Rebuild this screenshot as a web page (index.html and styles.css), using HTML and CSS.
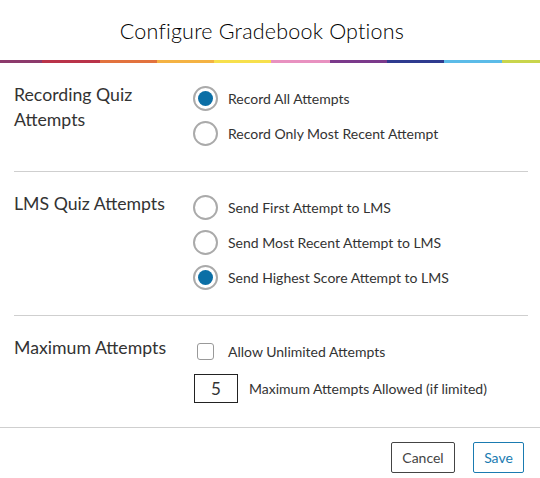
FILE: index.html
```html
<!DOCTYPE html>
<html>
<head>
<meta charset="utf-8">
<link rel="stylesheet" href="styles.css">
</head>
<body>
<div class="dialog">
  <header class="header">
    <h1 class="title">Configure Gradebook Options</h1>
  </header>
  <div class="rainbow">
    <span class="seg c1"></span><span class="seg c2"></span><span class="seg c3"></span><span class="seg c4"></span><span class="seg c5"></span><span class="seg c6"></span><span class="seg c7"></span><span class="seg c8"></span><span class="seg c9"></span><span class="seg c10"></span>
  </div>
  <section class="section">
    <div class="label">Recording Quiz<br>Attempts</div>
    <div class="options">
      <label class="opt"><span class="radio checked"></span><span class="opt-text">Record All Attempts</span></label>
      <label class="opt"><span class="radio"></span><span class="opt-text">Record Only Most Recent Attempt</span></label>
    </div>
  </section>
  <section class="section">
    <div class="label">LMS Quiz Attempts</div>
    <div class="options">
      <label class="opt"><span class="radio"></span><span class="opt-text">Send First Attempt to LMS</span></label>
      <label class="opt"><span class="radio"></span><span class="opt-text">Send Most Recent Attempt to LMS</span></label>
      <label class="opt"><span class="radio checked"></span><span class="opt-text">Send Highest Score Attempt to LMS</span></label>
    </div>
  </section>
  <section class="section last">
    <div class="label">Maximum Attempts</div>
    <div class="options">
      <label class="opt"><span class="checkbox"></span><span class="opt-text">Allow Unlimited Attempts</span></label>
      <div class="opt-input"><span class="numbox">5</span><span class="opt-text">Maximum Attempts Allowed (if limited)</span></div>
    </div>
  </section>
  <footer class="footer">
    <button class="btn cancel">Cancel</button>
    <button class="btn save">Save</button>
  </footer>
</div>
</body>
</html>
```
FILE: styles.css
```css
* { box-sizing: border-box; }
html, body { margin: 0; padding: 0; background: #fff; }
body { font-family: Lato, "Open Sans", sans-serif; color: #333; width: 540px; }
.header { height: 60px; display: flex; align-items: center; justify-content: center; padding-right: 16px; }
.title { margin: 0; font-weight: 300; font-size: 21.5px; color: #000; letter-spacing: 0.2px; padding-top: 1px; }
.rainbow { display: flex; height: 3px; }
.seg { display: block; height: 3px; }
.c1 { width: 42px; background: #8c3a6c; }
.c2 { width: 58px; background: #b93349; }
.c3 { width: 57px; background: #e2723e; }
.c4 { width: 57px; background: #f4b243; }
.c5 { width: 57px; background: #f7e04c; }
.c6 { width: 59px; background: #e891c0; }
.c7 { width: 57px; background: #7b3a8b; }
.c8 { width: 57px; background: #2f3b8f; }
.c9 { width: 58px; background: #5bbbe8; }
.c10 { flex: 1; background: #c9d54c; }
.section { display: flex; margin: 0 12px 0 14px; padding: 18px 0 20px; border-bottom: 1px solid #cfcfcf; }
.section.last { border-bottom: none; padding-bottom: 24px; }
.label { width: 179px; font-size: 17.7px; line-height: 25px; color: #333; padding-top: 1px; }
.options { display: flex; flex-direction: column; }
.opt { display: flex; align-items: center; height: 35px; }
.radio { width: 25px; height: 25px; border: 2px solid #aaa; border-radius: 50%; display: flex; align-items: center; justify-content: center; margin-right: 10px; }
.radio.checked::after { content: ""; width: 15px; height: 15px; border-radius: 50%; background: #0b6fa6; }
.opt-text { font-size: 14px; color: #333; }
.checkbox { width: 17px; height: 17px; border: 1.5px solid #999; border-radius: 3px; margin: 0 14px 0 4px; }
.opt-input { display: flex; align-items: center; margin-top: 5px; }
.numbox { width: 44px; height: 29px; border: 1px solid #222; display: flex; align-items: center; justify-content: center; font-size: 17px; color: #333; margin: 0 11px 0 1px; }
.footer { border-top: 1px solid #cfcfcf; display: flex; justify-content: flex-end; gap: 18px; padding: 14px 16px 0 0; }
.btn { font-family: Lato, "Open Sans", sans-serif; font-size: 14px; height: 31px; background: #fff; border-radius: 2px; padding: 0; cursor: pointer; }
.cancel { width: 64px; border: 1px solid #444; color: #444; }
.save { width: 51px; border: 1px solid #1a7bb1; color: #1a7bb1; }
```
